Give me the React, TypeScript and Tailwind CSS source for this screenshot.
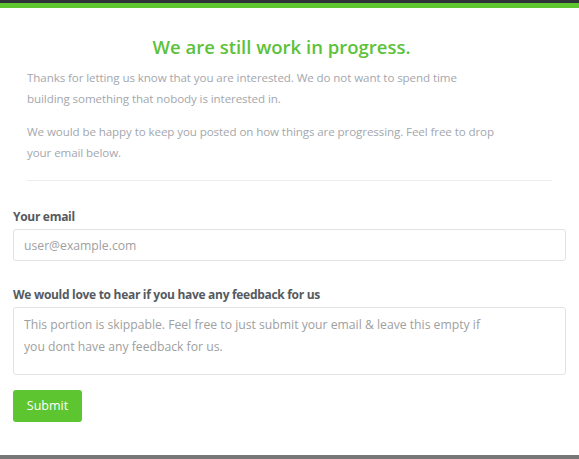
export default function App() {
  return (
    <div className="w-[579px] h-[459px] overflow-hidden bg-[#777777] flex flex-col" style={{ fontFamily: '"Open Sans", sans-serif' }}>
      <div className="h-[3px] bg-[#2e3138]" />
      <div className="h-[5px] bg-[#5cc52f]" />
      <div className="bg-white h-[447px] flex flex-col px-[13px]">
        <h1 className="mt-[28px] pr-[16px] text-center text-[18.5px] leading-[22px] font-semibold text-[#5cc23a]">We are still work in progress.</h1>
        <div className="px-[14px] mt-[9px] text-[11.6px] tracking-[-0.1px] leading-[21px] text-[#a4a7ad]">
          <p className="max-w-[468px]">Thanks for letting us know that you are interested. We do not want to spend time building something that nobody is interested in.</p>
          <p className="max-w-[468px] mt-[12px]">We would be happy to keep you posted on how things are progressing. Feel free to drop your email below.</p>
          <div className="mt-[17px] h-px bg-[#eeeeee]" />
        </div>
        <label className="mt-[27px] text-[12px] tracking-[-0.3px] leading-[18px] font-bold text-[#555a60]">Your email</label>
        <input className="mt-[3px] h-[32px] border border-[#e3e3e3] rounded-[3px] pl-[10px] text-[12.2px] placeholder:text-[#a0a0a0] outline-none" placeholder="user@example.com" />
        <label className="mt-[25px] text-[12px] tracking-[-0.3px] leading-[18px] font-bold text-[#555a60]">We would love to hear if you have any feedback for us</label>
        <textarea className="mt-[3px] h-[68px] border border-[#e3e3e3] rounded-[3px] pl-[10px] pr-[70px] py-[6px] text-[12.2px] leading-[22px] placeholder:text-[#a0a0a0] outline-none resize-none" placeholder="This portion is skippable. Feel free to just submit your email & leave this empty if you dont have any feedback for us." />
        <div className="mt-[15px]">
          <button className="w-[69px] h-[32px] bg-[#5cc52f] text-white text-[12.5px] rounded-[3px]">Submit</button>
        </div>
      </div>
    </div>
  );
}
